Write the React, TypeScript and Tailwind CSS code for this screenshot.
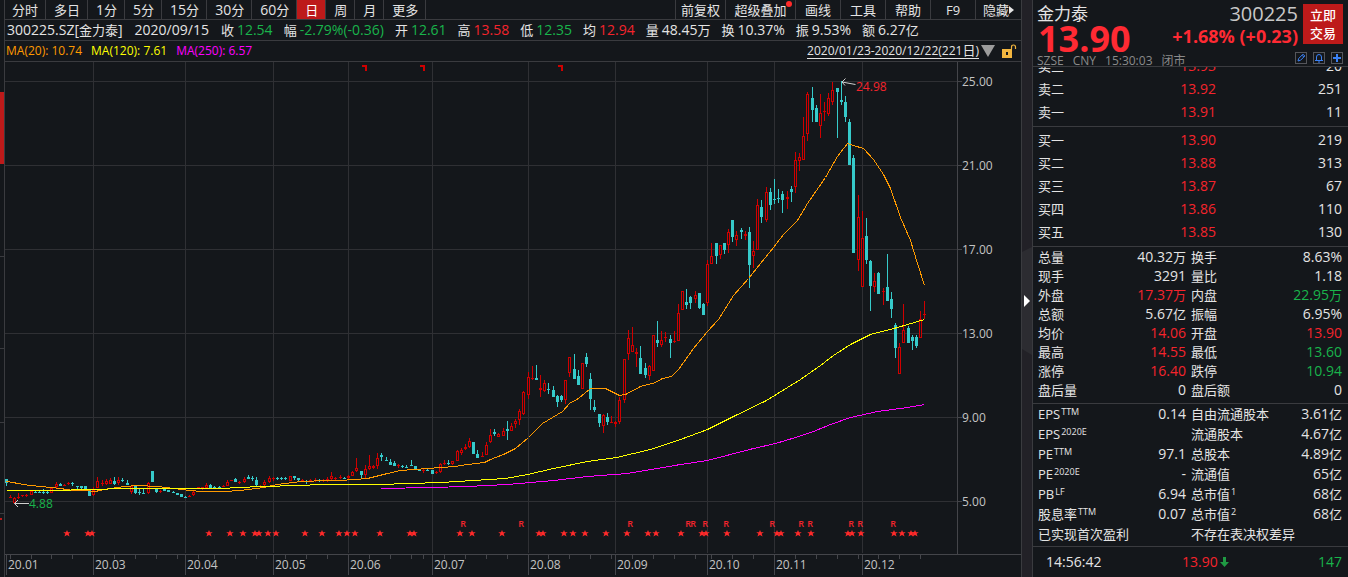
import type { ReactNode } from "react";

// [high, body top, body bottom, low, 1 = up / 0 = down]
type Candle = [number, number, number, number, number];

const CANDLES: Candle[] = [
  [479, 479, 483, 486, 0], [495, 497, 498, 498, 1], [497, 498, 503, 504, 1], [493, 497, 498, 499, 1], [495, 495, 496, 497, 1],
  [494, 495, 496, 497, 1], [491, 491, 495, 495, 1], [490, 492, 493, 493, 0], [491, 492, 493, 493, 0], [489, 492, 493, 494, 0],
  [490, 492, 493, 494, 0], [487, 488, 493, 493, 1], [482, 484, 487, 488, 1], [483, 484, 486, 486, 0], [484, 485, 486, 486, 1],
  [482, 483, 484, 485, 1], [482, 483, 484, 486, 0], [486, 486, 487, 491, 0], [486, 486, 488, 490, 0], [486, 486, 489, 489, 0],
  [489, 490, 496, 496, 0], [487, 490, 495, 496, 1], [477, 481, 488, 488, 1], [480, 483, 484, 486, 1], [479, 481, 484, 485, 1],
  [478, 480, 484, 484, 1], [477, 481, 484, 485, 0], [477, 480, 483, 485, 1], [478, 480, 481, 482, 0], [480, 483, 485, 485, 0],
  [485, 486, 492, 494, 1], [485, 486, 493, 494, 0], [489, 492, 493, 495, 0], [489, 493, 494, 494, 0], [482, 483, 493, 494, 1],
  [471, 471, 482, 482, 0], [488, 489, 492, 493, 0], [490, 491, 492, 493, 1], [489, 489, 491, 491, 0], [490, 490, 492, 492, 0],
  [491, 492, 493, 493, 0], [493, 493, 495, 495, 0], [494, 494, 497, 497, 0], [496, 497, 498, 498, 0], [495, 496, 497, 497, 1],
  [491, 492, 495, 496, 1], [487, 487, 488, 489, 1], [487, 487, 488, 490, 1], [483, 485, 488, 488, 1], [484, 485, 488, 488, 0],
  [486, 487, 488, 489, 0], [486, 487, 488, 488, 0], [485, 486, 487, 487, 1], [480, 482, 486, 486, 1], [480, 480, 481, 481, 1],
  [478, 479, 482, 482, 0], [481, 482, 483, 484, 1], [477, 479, 482, 483, 1], [475, 477, 479, 479, 0], [476, 478, 479, 481, 0],
  [477, 480, 485, 486, 0], [485, 486, 487, 488, 1], [480, 482, 485, 486, 1], [476, 478, 482, 483, 1], [477, 478, 479, 481, 1],
  [477, 478, 479, 480, 0], [477, 478, 479, 480, 0], [477, 478, 479, 480, 0], [476, 476, 481, 481, 1], [476, 476, 478, 480, 0],
  [478, 478, 480, 481, 0], [479, 480, 481, 482, 1], [480, 481, 482, 484, 0], [479, 480, 481, 482, 1], [478, 480, 481, 482, 1],
  [479, 480, 481, 482, 0], [479, 480, 481, 482, 1], [477, 479, 480, 482, 1], [472, 476, 479, 480, 1], [477, 478, 479, 480, 1],
  [475, 477, 478, 479, 1], [477, 478, 479, 479, 0], [475, 476, 478, 479, 1], [471, 472, 476, 476, 1], [458, 468, 471, 472, 1],
  [471, 471, 475, 478, 0], [465, 469, 475, 478, 1], [455, 466, 469, 470, 1], [465, 466, 468, 469, 1], [453, 458, 466, 469, 1],
  [453, 455, 457, 461, 0], [457, 460, 461, 461, 0], [459, 462, 465, 465, 0], [461, 463, 466, 466, 0], [464, 465, 466, 468, 1],
  [465, 466, 467, 468, 0], [465, 467, 468, 468, 0], [460, 465, 466, 466, 0], [466, 466, 469, 470, 0], [469, 469, 471, 471, 0],
  [469, 470, 471, 473, 1], [469, 470, 471, 471, 0], [470, 470, 474, 474, 0], [471, 472, 473, 474, 1], [463, 464, 472, 473, 1],
  [460, 463, 464, 465, 1], [460, 463, 464, 465, 0], [461, 461, 464, 465, 1], [450, 451, 461, 461, 1], [448, 450, 453, 455, 1],
  [444, 447, 449, 450, 1], [438, 441, 447, 448, 1], [442, 442, 454, 454, 0], [450, 454, 458, 458, 0], [452, 456, 457, 457, 1],
  [442, 445, 455, 455, 1], [429, 435, 442, 443, 1], [429, 432, 434, 436, 0], [433, 434, 437, 437, 1], [428, 431, 436, 436, 1],
  [421, 429, 431, 440, 0], [423, 426, 431, 431, 1], [419, 421, 424, 428, 1], [409, 411, 420, 425, 1], [391, 392, 414, 415, 1],
  [372, 377, 395, 399, 1], [366, 378, 379, 380, 1], [365, 378, 380, 380, 0], [375, 388, 390, 397, 1], [380, 383, 391, 392, 1],
  [383, 389, 390, 394, 0], [386, 390, 397, 397, 0], [395, 396, 402, 407, 0], [395, 396, 400, 402, 0], [380, 380, 400, 404, 1],
  [357, 357, 373, 377, 1], [354, 369, 379, 379, 0], [370, 376, 385, 385, 0], [363, 363, 389, 389, 1], [353, 357, 364, 367, 0],
  [373, 379, 399, 410, 0], [400, 407, 410, 412, 0], [414, 414, 423, 427, 0], [414, 415, 426, 433, 1], [413, 417, 422, 425, 0],
  [416, 422, 423, 423, 1], [421, 422, 424, 427, 1], [397, 400, 422, 424, 1], [359, 359, 400, 403, 1], [330, 338, 354, 360, 1],
  [327, 345, 352, 352, 1], [348, 352, 354, 367, 1], [346, 358, 374, 374, 0], [363, 368, 375, 378, 0], [365, 366, 376, 380, 1],
  [335, 335, 371, 371, 1], [321, 340, 343, 347, 0], [331, 340, 345, 347, 1], [332, 337, 338, 342, 1], [335, 339, 343, 358, 0],
  [331, 341, 342, 343, 1], [304, 313, 341, 341, 1], [291, 291, 310, 310, 1], [289, 302, 305, 309, 0], [296, 297, 303, 309, 0],
  [291, 295, 299, 303, 1], [293, 293, 308, 309, 0], [303, 304, 315, 315, 0], [260, 264, 303, 306, 1], [243, 256, 264, 264, 1],
  [243, 243, 256, 264, 0], [245, 245, 255, 259, 1], [243, 243, 250, 254, 0], [229, 232, 245, 253, 1], [220, 220, 237, 242, 0],
  [231, 235, 240, 246, 1], [228, 230, 232, 239, 0], [231, 234, 236, 240, 1], [227, 232, 265, 288, 0], [241, 251, 256, 268, 1],
  [199, 205, 250, 250, 1], [200, 207, 217, 223, 0], [187, 192, 220, 222, 1], [188, 192, 205, 210, 0], [179, 199, 200, 204, 0],
  [189, 198, 199, 203, 0], [191, 194, 200, 213, 0], [191, 197, 199, 209, 1], [186, 189, 192, 202, 0], [152, 160, 187, 193, 1],
  [153, 157, 161, 171, 1], [117, 136, 160, 160, 1], [92, 94, 134, 141, 1], [87, 98, 110, 122, 0], [105, 108, 122, 122, 0],
  [94, 113, 126, 138, 1], [102, 111, 112, 121, 1], [93, 98, 114, 116, 1], [82, 90, 102, 105, 1], [88, 88, 92, 138, 0],
  [81, 100, 102, 105, 0], [96, 102, 117, 122, 0], [119, 122, 165, 165, 0], [155, 158, 253, 253, 0], [195, 217, 260, 271, 1],
  [211, 238, 287, 287, 1], [218, 236, 260, 264, 0], [260, 261, 286, 311, 0], [273, 281, 287, 292, 1], [272, 273, 294, 294, 0],
  [288, 291, 292, 305, 1], [254, 287, 301, 301, 0], [292, 299, 309, 318, 0], [323, 325, 348, 358, 0], [343, 347, 374, 374, 1],
  [304, 330, 343, 343, 1], [326, 328, 343, 343, 0], [335, 337, 341, 350, 0], [335, 337, 346, 348, 0], [311, 319, 338, 338, 1],
  [301, 314, 315, 319, 1],
];

const MA20 =
  "6,481 13,482 17,483 30,485 50,487 60,488 72,490 83,490 95,491 103,489 117,487 125,486 137,485 157,486 173,488 190,490 200,491 223,491 240,490 263,487 277,484 300,481 327,480 340,480 367,478 387,473 400,470 427,468 455,466 467,464 484,462 490,459 503,454 515,448 528,437 542,423 562,411 569,403 578,398 590,388 605,388 619,395 625,394 640,386 655,382 662,378 671,376 678,369 693,348 707,331 718,319 733,295 748,278 760,263 773,247 783,234 797,220 807,203 825,177 837,156 847,143 853,145 863,148 873,159 883,174 890,188 900,217 910,240 917,263 924,285";
const MA120 =
  "6,490 45,490 97,489 118,488 220,488 260,486 300,485 320,484 378,484 440,482 473,480 505,478 527,474 553,468 587,461 616,457 650,449 680,439 707,429 733,416 766,400 800,379 820,365 833,355 850,344 870,334 897,327 924,319";
const MA250 =
  "381,488 430,487 467,486 507,484 530,482 553,480 587,476 627,473 680,464 707,460 753,448 775,443 795,437 813,431 830,424 850,417 877,411 907,407 924,404";

const MONTHS = [
  { x: 6, label: "20.01" },
  { x: 93, label: "20.03" },
  { x: 185, label: "20.04" },
  { x: 273, label: "20.05" },
  { x: 348, label: "20.06" },
  { x: 432, label: "20.07" },
  { x: 528, label: "20.08" },
  { x: 615, label: "20.09" },
  { x: 707, label: "20.10" },
  { x: 774, label: "20.11" },
  { x: 862, label: "20.12" },
];

const PRICES = [
  { y: 81, label: "25.00" },
  { y: 165, label: "21.00" },
  { y: 249, label: "17.00" },
  { y: 333, label: "13.00" },
  { y: 417, label: "9.00" },
  { y: 501, label: "5.00" },
];

const TICKS = [
  10, 31, 51, 72, 114, 135, 156, 177, 198, 214, 235, 256, 285, 306, 327, 369, 390, 411, 423, 444, 465, 486, 507, 548,
  569, 590, 611, 632, 653, 674, 695, 711, 732, 753, 795, 816, 837, 858, 878, 899, 920,
];
const STARS = [
  67, 88, 92, 209, 230, 243, 255, 259, 268, 276, 305, 322, 339, 347, 355, 380, 410, 414, 460, 472, 502, 539, 543, 564,
  573, 585, 606, 627, 648, 656, 681, 702, 706, 727, 760, 777, 781, 798, 811, 848, 852, 861, 894, 902, 911, 915,
];
const REPORTS = [463, 521, 630, 688, 693, 705, 726, 772, 801, 810, 851, 860, 893];
const CORNERS = [362, 420, 558];

const PERIODS = ["分时", "多日", "1分", "5分", "15分", "30分", "60分", "日", "周", "月", "更多"];

const TOOLS = [
  { label: "前复权", width: "w-[50px]" },
  { label: "超级叠加", width: "w-[70px]", dot: true },
  { label: "画线", width: "w-[45px]" },
  { label: "工具", width: "w-[45px]" },
  { label: "帮助", width: "w-[45px]" },
  { label: "F9", width: "w-[45px]" },
  { label: "隐藏", width: "w-[46px]", arrow: true },
];

const WHITE = "text-[#e4e4e4]";
const RED = "text-[#f5242c]";
const GREEN = "text-[#19b44b]";

const QUOTE = [
  { label: "收", value: "12.54", color: GREEN },
  { label: "幅", value: "-2.79%(-0.36)", color: GREEN },
  { label: "开", value: "12.61", color: GREEN },
  { label: "高", value: "13.58", color: RED },
  { label: "低", value: "12.35", color: GREEN },
  { label: "均", value: "12.94", color: RED },
  { label: "量", value: "48.45万", color: WHITE },
  { label: "换", value: "10.37%", color: WHITE },
  { label: "振", value: "9.53%", color: WHITE },
  { label: "额", value: "6.27亿", color: WHITE },
];

const ASKS = [
  ["卖三", "13.93", "20"],
  ["卖二", "13.92", "251"],
  ["卖一", "13.91", "11"],
];
const BIDS = [
  ["买一", "13.90", "219"],
  ["买二", "13.88", "313"],
  ["买三", "13.87", "67"],
  ["买四", "13.86", "110"],
  ["买五", "13.85", "130"],
];

const STATS = [
  ["总量", "40.32万", WHITE, "换手", "8.63%", WHITE],
  ["现手", "3291", WHITE, "量比", "1.18", WHITE],
  ["外盘", "17.37万", RED, "内盘", "22.95万", GREEN],
  ["总额", "5.67亿", WHITE, "振幅", "6.95%", WHITE],
  ["均价", "14.06", RED, "开盘", "13.90", RED],
  ["最高", "14.55", RED, "最低", "13.60", GREEN],
  ["涨停", "16.40", RED, "跌停", "10.94", GREEN],
  ["盘后量", "0", WHITE, "盘后额", "0", WHITE],
];

const FUNDAMENTALS = [
  { name: "EPS", sup: "TTM", value: "0.14", name2: "自由流通股本", value2: "3.61亿" },
  { name: "EPS", sup: "2020E", value: "", name2: "流通股本", value2: "4.67亿" },
  { name: "PE", sup: "TTM", value: "97.1", name2: "总股本", value2: "4.89亿" },
  { name: "PE", sup: "2020E", value: "-", name2: "流通值", value2: "65亿" },
  { name: "PB", sup: "LF", value: "6.94", name2: "总市值", sup2: "1", value2: "68亿" },
  { name: "股息率", sup: "TTM", value: "0.07", name2: "总市值", sup2: "2", value2: "68亿" },
];

// Chinese runs are set one size below the figures
function Mixed({ children }: { children: string }) {
  return (
    <>
      {children.split(/([\u4e00-\u9fff]+)/).map((part, i) =>
        i % 2 ? (
          <span key={i} className="text-[13px]">
            {part}
          </span>
        ) : (
          part
        )
      )}
    </>
  );
}

function PeriodBar() {
  return (
    <nav className="flex h-5 items-stretch justify-between border-b border-[#3a3b3f] leading-[18px]">
      <div className="-ml-px flex">
        {PERIODS.map((p) => (
          <button
            key={p}
            className={`flex items-center whitespace-nowrap border-r border-[#3a3b3f] pl-2 pr-[7px] ${
              p === "日" ? "bg-[#bd1a1a] text-white" : ""
            }`}
          >
            <span>
              <Mixed>{p}</Mixed>
            </span>
          </button>
        ))}
      </div>
      <div className="flex">
        {TOOLS.map((t) => (
          <button
            key={t.label}
            className={`relative flex items-center justify-center whitespace-nowrap border-l border-[#3a3b3f] ${t.width}`}
          >
            <span className="text-[13px]">{t.label}</span>
            {t.dot && <span className="absolute right-[3px] top-px size-[6px] rounded-full bg-[#ff2a2a]" />}
            {t.arrow && (
              <svg className="h-2 w-[5px] fill-current" viewBox="0 0 5 8">
                <path d="M0 0L5 4L0 8Z" />
              </svg>
            )}
          </button>
        ))}
      </div>
    </nav>
  );
}

function QuoteBar() {
  return (
    <div className="flex h-[21px] items-center gap-[11px] overflow-hidden whitespace-nowrap border-b border-[#3a3b3f] pl-[2px] leading-5">
      <span>
        <Mixed>300225.SZ[金力泰]</Mixed>
      </span>
      <span className="px-px">2020/09/15</span>
      {QUOTE.map((q) => (
        <span key={q.label} className="flex items-baseline gap-[3px]">
          <span className="text-[13px]">{q.label}</span>
          <span className={q.color}>
            <Mixed>{q.value}</Mixed>
          </span>
        </span>
      ))}
    </div>
  );
}

function IndicatorBar() {
  return (
    <div className="flex h-[21px] items-center justify-between whitespace-nowrap border-b border-[#3a3b3f] pl-px pr-1 text-xs">
      <div className="flex gap-[9px]">
        <span className="text-[#ff9a00]">MA(20): 10.74</span>
        <span className="text-[#ffff00]">MA(120): 7.61</span>
        <span className="text-[#ff00ff]">MA(250): 6.57</span>
      </div>
      <div className="flex items-center">
        <button className="border-b border-[#e4e4e4] leading-[15px]">
          2020/01/23-2020/12/22(221<span className="text-[13px]">日</span>)
        </button>
        <svg className="ml-[2px] h-3 w-[14px]" viewBox="0 0 14 12">
          <path d="M0 0H14L7 12Z" fill="#9c9c9c" />
        </svg>
        <svg className="ml-[6px] h-[14px] w-4" viewBox="0 0 16 14">
          <rect x="1" y="5" width="10" height="9" fill="#f3b63f" />
          <path d="M10.5 5V3Q10.5 1 12.5 1T14.5 3V5" fill="none" stroke="#f3b63f" strokeWidth="1.2" />
          <rect x="5" y="8" width="2" height="3" fill="#14171b" />
        </svg>
      </div>
    </div>
  );
}

function Chart() {
  return (
    <svg
      className="block h-auto w-full"
      viewBox="5 62 1016 515"
      fontFamily="'Open Sans', sans-serif"
      fontSize="12"
      shapeRendering="crispEdges"
    >
      <g fill="#2f3034">
        {PRICES.map((p) => (
          <rect key={p.y} x="5" y={p.y} width="952" height="1" />
        ))}
        {MONTHS.slice(1).map((m) => (
          <rect key={m.x} x={m.x} y="62" width="1" height="491" />
        ))}
      </g>
      <g fill="#44454a">
        <rect x="957" y="62" width="1" height="492" />
        <rect x="5" y="554" width="1016" height="1" />
        {PRICES.map((p) => (
          <rect key={p.y} x="958" y={p.y} width="4" height="1" />
        ))}
        {MONTHS.map((m) => (
          <rect key={m.x} x={m.x} y="555" width="1" height="20" />
        ))}
        {TICKS.map((x) => (
          <rect key={x} x={x} y="555" width="1" height="4" />
        ))}
      </g>
      <g fill="#c4c4c4">
        {PRICES.map((p) => (
          <text key={p.y} x="962" y={p.y + 5}>
            {p.label}
          </text>
        ))}
        {MONTHS.map((m) => (
          <text key={m.x} x={m.x + 2} y="569">
            {m.label}
          </text>
        ))}
      </g>

      {CANDLES.map(([high, top, bottom, low, up], i) => {
        const x = Math.floor(6.05 + i * 4.1765);
        const color = up ? "#d00000" : "#36caca";
        return (
          <g key={i} fill={color}>
            <rect x={x} y={high} width="1" height={top - high} />
            <rect x={x} y={bottom} width="1" height={low - bottom} />
            <rect x={x - 1} y={top} width="3" height={bottom - top} />
            {up === 1 && bottom - top > 2 && (
              <rect x={x} y={top + 1} width="1" height={bottom - top - 2} fill="#14171b" />
            )}
          </g>
        );
      })}

      <g fill="none" strokeWidth="1" transform="translate(0.5 0.5)">
        <polyline points={MA20} stroke="#ff9a00" />
        <polyline points={MA120} stroke="#ffff00" />
        <polyline points={MA250} stroke="#ff00ff" />
      </g>

      <g fill="#d00000">
        {CORNERS.map((x) => (
          <path key={x} d={`M${x} 65h5v6h-2v-4h-3z`} />
        ))}
      </g>
      <g fill="#ff2a2a" shapeRendering="geometricPrecision">
        {STARS.map((x) => (
          <path key={x} d={`M${x} 530l1 2.2h2.8l-2.2 1.6 1 2.7-2.6-1.6-2.6 1.6 1-2.7-2.2-1.6h2.8z`} />
        ))}
      </g>
      <g fill="#f5242c" fontSize="9" fontWeight="600" textAnchor="middle">
        {REPORTS.map((x) => (
          <text key={x} x={x} y="527">
            R
          </text>
        ))}
      </g>

      <g fill="none" stroke="#d0d0d0" shapeRendering="geometricPrecision">
        <path d="M29 503.5H14.5M18 500L14.5 503.5L18 507" />
        <path d="M855.5 84.5L842 82M845.5 78.5L842 82L845 85.5" />
      </g>
      <text x="29" y="508" fill="#19b44b">
        4.88
      </text>
      <text x="856" y="91" fill="#f5242c">
        24.98
      </text>
    </svg>
  );
}

function IconButton({ label, children }: { label: string; children: ReactNode }) {
  return (
    <button aria-label={label} className="flex size-3 items-center justify-center border border-[#55565b]">
      <svg className="size-[10px] shrink-0" viewBox="0 0 10 10" fill="none" stroke="#3b82f6">
        {children}
      </svg>
    </button>
  );
}

function PanelHeader() {
  return (
    <header className="h-[67px] border-b border-[#3a3b3f] pl-1 pr-[5px] pt-1">
      <div className="flex gap-[5px]">
        <div className="min-w-0 flex-1">
          <div className="flex h-5 items-center justify-between">
            <h1 className="text-[17px] leading-5">金力泰</h1>
            <span className="text-xl leading-5 text-[#c8c8c8]">300225</span>
          </div>
          <div className="flex h-7 items-start justify-between whitespace-nowrap font-bold text-[#ff2a33]">
            <span className="pl-px pt-px text-4xl leading-7">13.90</span>
            <span className="text-lg leading-6">+1.68% (+0.23)</span>
          </div>
        </div>
        <button className="size-10 bg-[#bd1a1a] text-[13px] font-medium leading-[18px] text-white">
          立即
          <br />
          交易
        </button>
      </div>
      <div className="flex h-[14px] justify-between">
        <div className="flex items-end gap-[9px] whitespace-nowrap text-xs leading-[10px] text-[#8a8a8a]">
          <span>SZSE</span>
          <span>CNY</span>
          <span>15:30:03</span>
          <span>闭市</span>
        </div>
        <div className="flex gap-[6px]">
          <IconButton label="编辑">
            <path d="M2 8L2.7 5.5L7 1.2L8.8 3L4.5 7.3Z M6 2.2L7.8 4" />
          </IconButton>
          <IconButton label="提醒">
            <path d="M1 7.5H9M2.5 7V4Q2.5 1.5 5 1.5T7.5 4V7M4 9H6" />
          </IconButton>
          <IconButton label="添加">
            <path d="M5 1V9M1 5H9" strokeWidth="2" />
          </IconButton>
        </div>
      </div>
    </header>
  );
}

function OrderBook({ rows }: { rows: string[][] }) {
  return (
    <table className="w-full shrink-0 table-fixed leading-5">
      <tbody>
        {rows.map(([level, price, volume]) => (
          <tr key={level} className="h-[23px]">
            <th className="w-[90px] p-0 text-left text-[13px] font-normal">{level}</th>
            <td className={`w-[88px] p-0 text-right ${RED}`}>{price}</td>
            <td className="p-0 text-right">{volume}</td>
          </tr>
        ))}
      </tbody>
    </table>
  );
}

function SidePanel() {
  return (
    <aside className="w-[316px] shrink-0 border-l border-[#3a3b3f]">
      <PanelHeader />
      <section className="flex h-[60px] flex-col justify-end overflow-hidden border-b border-[#3a3b3f] pb-[3px] pl-[5px] pr-[6px]">
        <OrderBook rows={ASKS} />
      </section>
      <section className="border-b border-[#3a3b3f] pb-[3px] pl-[5px] pr-[6px] pt-px">
        <OrderBook rows={BIDS} />
      </section>

      <section className="border-b border-[#3a3b3f] pb-1 pl-[5px] pr-[6px]">
        <table className="w-full table-fixed leading-4">
          <tbody>
            {STATS.map(([name, value, color, name2, value2, color2]) => (
              <tr key={name} className="h-[19px]">
                <th className="w-[60px] p-0 text-left text-[13px] font-normal">{name}</th>
                <td className={`w-[88px] p-0 text-right ${color}`}>
                  <Mixed>{value}</Mixed>
                </td>
                <th className="w-[84px] p-0 pl-[5px] text-left text-[13px] font-normal">{name2}</th>
                <td className={`p-0 text-right ${color2}`}>
                  <Mixed>{value2}</Mixed>
                </td>
              </tr>
            ))}
          </tbody>
        </table>
      </section>

      <section className="border-b border-[#3a3b3f] pb-[2px] pl-[5px] pr-[6px]">
        <table className="w-full table-fixed whitespace-nowrap leading-4">
          <tbody>
            {FUNDAMENTALS.map((f) => (
              <tr key={f.name + f.sup} className="h-5">
                <th className="w-[80px] p-0 text-left text-[13px] font-normal">
                  {f.name}
                  <sup className="pl-px text-[9px]">{f.sup}</sup>
                </th>
                <td className="w-[68px] p-0 text-right">{f.value}</td>
                <th className="w-[96px] p-0 pl-[5px] text-left text-[13px] font-normal">
                  {f.name2}
                  {f.sup2 && <sup className="pl-px text-[9px]">{f.sup2}</sup>}
                </th>
                <td className="p-0 text-right">
                  <Mixed>{f.value2}</Mixed>
                </td>
              </tr>
            ))}
            <tr className="h-5 text-[13px]">
              <td colSpan={2} className="p-0">
                已实现首次盈利
              </td>
              <td colSpan={2} className="p-0 pl-[5px]">
                不存在表决权差异
              </td>
            </tr>
          </tbody>
        </table>
      </section>

      <footer className="flex h-[30px] items-center pl-[13px] pr-[6px]">
        <span className="w-[136px]">14:56:42</span>
        <span className={RED}>13.90</span>
        <svg className="ml-[2px] h-[10px] w-[9px]" viewBox="0 0 9 10">
          <path d="M3 0H6V5H9L4.5 10L0 5H3Z" fill="#1f9a43" />
        </svg>
        <span className={`ml-auto ${GREEN}`}>147</span>
      </footer>
    </aside>
  );
}

export default function App() {
  return (
    <div className="flex min-h-screen w-full overflow-hidden bg-[#14171b] font-['Open_Sans','Noto_Sans_CJK_SC',sans-serif] text-sm text-[#e4e4e4]">
      <div className="flex w-1 shrink-0 flex-col pt-[92px]">
        <div className="h-[72px] bg-[#bd1a1a]" />
        <div className="h-[93px] border-b border-[#3a3b3f]" />
        <div className="h-[92px] border-b border-[#3a3b3f]" />
        <div className="h-[74px] border-b border-[#3a3b3f]" />
        <div className="h-[91px] border-b border-[#3a3b3f]" />
        <div className="mt-1 size-[2px] bg-[#bd1a1a]" />
      </div>

      <main className="min-w-0 flex-1 border-x border-[#3a3b3f]">
        <PeriodBar />
        <QuoteBar />
        <IndicatorBar />
        <Chart />
      </main>

      <button aria-label="展开" className="flex w-[10px] shrink-0 items-center bg-[#222127] pt-6">
        <svg className="h-[108px] w-[10px]" viewBox="0 0 10 108">
          <path d="M10 0L0 5V102L10 108Z" fill="#2c2c31" />
          <path d="M2 48L8 54L2 60Z" fill="#fff" />
        </svg>
      </button>

      <SidePanel />
    </div>
  );
}
